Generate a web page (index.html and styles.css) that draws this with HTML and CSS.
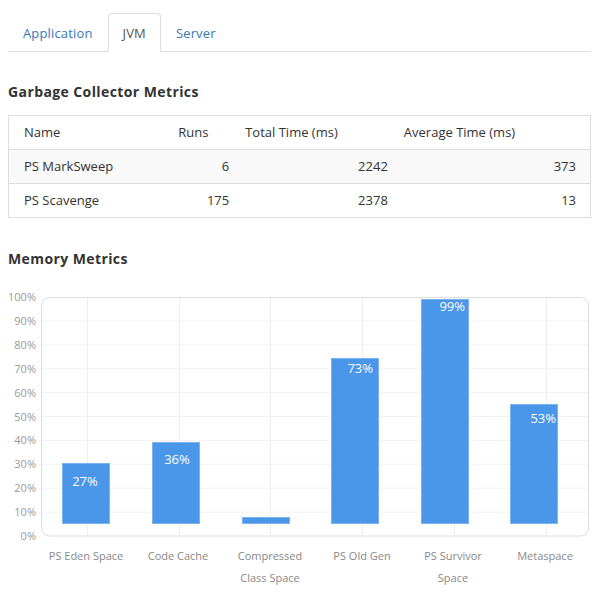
FILE: index.html
```html
<!DOCTYPE html>
<html>
<head>
<meta charset="utf-8">
<link rel="stylesheet" href="styles.css">
</head>
<body>
<div class="page">
  <ul class="tabs">
    <li class="tab"><a>Application</a></li>
    <li class="tab active"><a>JVM</a></li>
    <li class="tab"><a>Server</a></li>
  </ul>

  <h4 class="section-title gc-title">Garbage Collector Metrics</h4>
  <table class="metrics">
    <colgroup>
      <col class="c-name"><col class="c-runs"><col class="c-total"><col class="c-avg">
    </colgroup>
    <thead>
      <tr><th class="first">Name</th><th>Runs</th><th>Total Time (ms)</th><th class="last">Average Time (ms)</th></tr>
    </thead>
    <tbody>
      <tr class="striped"><td class="first">PS MarkSweep</td><td class="num">6</td><td class="num">2242</td><td class="num last">373</td></tr>
      <tr><td class="first">PS Scavenge</td><td class="num">175</td><td class="num">2378</td><td class="num last">13</td></tr>
    </tbody>
  </table>

  <h4 class="section-title mem-title">Memory Metrics</h4>
  <svg class="chart" width="584" height="309" viewBox="0 0 584 309">
    <g class="hgrid">
      <line x1="33" x2="580" y1="35.9" y2="35.9"/>
      <line x1="33" x2="580" y1="59.8" y2="59.8"/>
      <line x1="33" x2="580" y1="83.7" y2="83.7"/>
      <line x1="33" x2="580" y1="107.6" y2="107.6"/>
      <line x1="33" x2="580" y1="131.5" y2="131.5"/>
      <line x1="33" x2="580" y1="155.4" y2="155.4"/>
      <line x1="33" x2="580" y1="179.3" y2="179.3"/>
      <line x1="33" x2="580" y1="203.2" y2="203.2"/>
      <line x1="33" x2="580" y1="227.1" y2="227.1"/>
    </g>
    <g class="vgrid">
      <line x1="79.5" x2="79.5" y1="12" y2="251"/>
      <line x1="171.5" x2="171.5" y1="12" y2="251"/>
      <line x1="262.5" x2="262.5" y1="12" y2="251"/>
      <line x1="354.5" x2="354.5" y1="12" y2="251"/>
      <line x1="446.5" x2="446.5" y1="12" y2="251"/>
      <line x1="538.5" x2="538.5" y1="12" y2="251"/>
    </g>
    <rect class="plot" x="33.5" y="12.5" width="547" height="238.5" rx="8" ry="8"/>
    <g class="ylabels">
      <text x="28" y="16">100%</text>
      <text x="28" y="39.9">90%</text>
      <text x="28" y="63.8">80%</text>
      <text x="28" y="87.7">70%</text>
      <text x="28" y="111.6">60%</text>
      <text x="28" y="135.5">50%</text>
      <text x="28" y="159.4">40%</text>
      <text x="28" y="183.3">30%</text>
      <text x="28" y="207.2">20%</text>
      <text x="28" y="231.1">10%</text>
      <text x="28" y="255">0%</text>
    </g>
    <g class="bars">
      <rect x="54.5" y="178.5" width="47" height="60"/>
      <rect x="144.5" y="157.5" width="47" height="81"/>
      <rect x="234.5" y="232.5" width="47" height="6"/>
      <rect x="323.5" y="73.5" width="47" height="165"/>
      <rect x="413.5" y="14.5" width="47" height="224"/>
      <rect x="502.5" y="119.5" width="47" height="119"/>
    </g>
    <g class="barlabels">
      <text x="77" y="200.5" class="mid">27%</text>
      <text x="169" y="178.5" class="mid">36%</text>
      <text x="365" y="87.5" class="end">73%</text>
      <text x="457" y="25.5" class="end">99%</text>
      <text x="548" y="137.5" class="end">53%</text>
    </g>
    <g class="xlabels">
      <text x="78" y="275">PS Eden Space</text>
      <text x="170" y="275">Code Cache</text>
      <text x="262" y="275">Compressed</text>
      <text x="262" y="297">Class Space</text>
      <text x="354" y="275">PS Old Gen</text>
      <text x="445" y="275">PS Survivor</text>
      <text x="445" y="297">Space</text>
      <text x="537" y="275">Metaspace</text>
    </g>
  </svg>
</div>
</body>
</html>
```
FILE: styles.css
```css
* { box-sizing: border-box; }
html, body { margin: 0; padding: 0; background: #fff; }
body {
  font-family: "Open Sans", "DejaVu Sans", sans-serif;
  font-size: 13px;
  color: #333;
}
.page { padding: 13px 7px 0 8px; }

.tabs {
  list-style: none;
  margin: 0;
  padding: 0;
  display: flex;
  border-bottom: 1px solid #ddd;
}
.tab {
  margin-bottom: -1px;
}
.tab a {
  display: block;
  padding: 10px 14px 9px;
  line-height: 18px;
  color: #3a77b5;
  border: 1px solid transparent;
  border-radius: 4px 4px 0 0;
  letter-spacing: 0.15px;
}
.tab.active a {
  color: #555;
  background: #fff;
  border-color: #ddd;
  border-bottom-color: transparent;
}

.section-title {
  margin: 0;
  font-family: "Open Sans", sans-serif;
  font-weight: 700;
  font-size: 14px;
  line-height: 20px;
  letter-spacing: 0.4px;
  color: #333;
}
.gc-title { margin-top: 30px; margin-bottom: 13px; }
.mem-title { margin-top: 31px; margin-bottom: 16px; }

.metrics {
  width: 583px;
  border-collapse: collapse;
  border: 1px solid #ddd;
}
.c-name { width: 162px; }
.c-runs { width: 67px; }
.c-total { width: 159px; }
.c-avg { width: 195px; }
.metrics th, .metrics td {
  padding: 8px 8px;
  line-height: 17px;
  text-align: left;
  font-weight: 400;
  border-top: 1px solid #ddd;
}
.metrics .first { padding-left: 15px; }
.metrics .last { padding-right: 14px; }
.metrics td.num { text-align: right; }
.metrics tr.striped td { background: #f9f9f9; }

.chart { display: block; font-family: "Open Sans", sans-serif; }
.hgrid line { stroke: #f2f2f2; stroke-width: 1; }
.vgrid line { stroke: #eeeeee; stroke-width: 1; }
.plot { fill: none; stroke: #dddddd; stroke-width: 1; }
.ylabels text { font-size: 11px; fill: #999; text-anchor: end; }
.bars rect { fill: #4a96e8; stroke: #7ab3f0; stroke-width: 1; }
.barlabels text { font-size: 13px; fill: #fff; }
.barlabels .mid { text-anchor: middle; }
.barlabels .end { text-anchor: end; }
.xlabels text { font-size: 11px; fill: #888; text-anchor: middle; }
```
